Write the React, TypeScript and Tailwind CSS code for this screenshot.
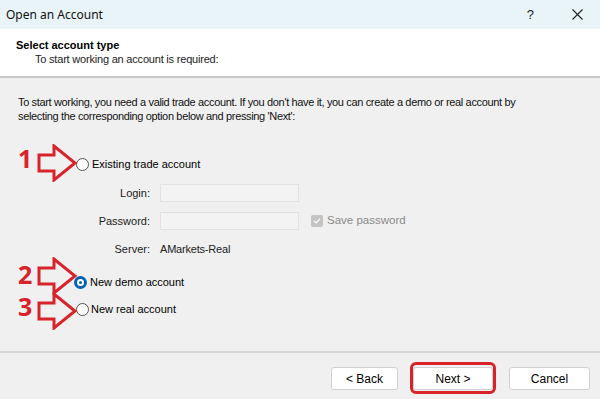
import React from 'react';

const font = { fontFamily: '"Liberation Sans", Arial, sans-serif' };
const digitFont = { fontFamily: '"Open Sans", "Liberation Sans", sans-serif' };

const Arrow: React.FC<{ className: string }> = ({ className }) => (
  <svg className={className} width="42" height="38" viewBox="0 0 42 38" fill="none">
    <path
      d="M2 11 H17 V2 L38 19 L17 36 V27 H2 Z"
      stroke="#d8232a"
      strokeWidth="3"
      strokeLinejoin="miter"
    />
  </svg>
);

const Radio: React.FC<{ checked?: boolean }> = ({ checked }) =>
  checked ? (
    <span className="w-[13px] h-[13px] rounded-full bg-[#0063b1] flex items-center justify-center">
      <span className="w-[7px] h-[7px] rounded-full border-2 border-white bg-[#0063b1]" />
    </span>
  ) : (
    <span className="w-[13px] h-[13px] rounded-full border border-[#555] bg-white" />
  );

const App: React.FC = () => {
  return (
    <div className="w-[600px] h-[399px] flex flex-col bg-[#f0f0f0] text-[11px] text-black overflow-hidden" style={font}>
      {/* title bar */}
      <div className="h-[29px] bg-[#e9f4f8] flex items-center pl-[6px] pr-[16px]">
        <span className="text-[12px] text-[#111]" style={{ fontFamily: '"Noto Sans", "Liberation Sans", sans-serif' }}>Open an Account</span>
        <span className="ml-auto text-[13px] text-[#222] mr-[38px]">?</span>
        <svg width="11" height="11" viewBox="0 0 11 11" className="mr-[1px]">
          <path d="M0.5 0.5 L10.5 10.5 M10.5 0.5 L0.5 10.5" stroke="#222" strokeWidth="1.1" />
        </svg>
      </div>

      {/* header */}
      <div className="h-[49px] bg-white pt-[10px] pl-[16px] border-b-2 border-[#c8c8c8]">
        <div className="font-bold text-[11px] leading-[13px]">Select account type</div>
        <div className="pl-[19px] leading-[14px] text-[#222] tracking-[-0.2px]">To start working an account is required:</div>
      </div>

      {/* body */}
      <div className="relative flex-1 pl-[18px] pt-[17px] border-b-2 border-[#d6d6d6]">
        <p className="leading-[14px] tracking-[-0.35px] text-[#111] w-[530px]">
          To start working, you need a valid trade account. If you don't have it, you can create a demo or real account by selecting the corresponding option below and pressing 'Next':
        </p>

        <div className="mt-[34px] ml-[58px] flex items-center gap-[2px] h-[14px]">
          <Radio />
          <span className="ml-[1px]">Existing trade account</span>
        </div>

        <div className="grid grid-cols-[132px_139px_auto] gap-x-[10px] gap-y-[10px] mt-[13px] items-center">
          <span className="text-right text-[#222]">Login:</span>
          <div className="h-[18px] border border-[#e2e2e2] bg-[#f3f3f3]" />
          <span />
          <span className="text-right text-[#222]">Password:</span>
          <div className="h-[18px] border border-[#e2e2e2] bg-[#f3f3f3]" />
          <span className="flex items-center gap-[4px] ml-[2px] text-[#8a8a8a] text-[11.5px]">
            <span className="w-[12px] h-[12px] rounded-[2px] bg-[#c4c4c4] flex items-center justify-center">
              <svg width="8" height="8" viewBox="0 0 8 8">
                <path d="M1 4 L3.2 6 L7 1.8" stroke="white" strokeWidth="1.2" fill="none" />
              </svg>
            </span>
            Save password
          </span>
          <span className="text-right text-[#222] mt-[1px]">Server:</span>
          <span className="text-[#222] mt-[1px] tracking-[-0.2px]">AMarkets-Real</span>
          <span />
        </div>

        <div className="mt-[18px] ml-[56px] flex items-center gap-[3px] h-[14px]">
          <Radio checked />
          <span>New demo account</span>
        </div>
        <div className="mt-[13px] ml-[58px] flex items-center gap-[2px] h-[14px]">
          <Radio />
          <span>New real account</span>
        </div>

        {/* annotations */}
        <span className="absolute left-[18px] top-[68px] text-[#d8232a] font-bold text-[25px] leading-none" style={digitFont}>1</span>
        <Arrow className="absolute left-[37px] top-[66px]" />
        <span className="absolute left-[18px] top-[184px] text-[#d8232a] font-bold text-[25px] leading-none" style={digitFont}>2</span>
        <Arrow className="absolute left-[37px] top-[179px]" />
        <span className="absolute left-[18px] top-[216px] text-[#d8232a] font-bold text-[25px] leading-none" style={digitFont}>3</span>
        <Arrow className="absolute left-[37px] top-[214px]" />
      </div>

      {/* footer */}
      <div className="h-[46px] flex items-start pt-[14px] pr-[10px] justify-end text-[12px]">
        <button className="w-[67px] h-[23px] bg-white border border-[#d0d0d0] rounded-[3px] mr-[15px]">&lt; Back</button>
        <div className="relative mr-[16px]">
          <button className="w-[80px] h-[23px] bg-white border border-[#d0d0d0] rounded-[3px]">Next &gt;</button>
          <span className="absolute -left-[3px] -top-[5px] w-[86px] h-[32px] border-[3px] border-[#d8232a] rounded-[6px]" />
        </div>
        <button className="w-[81px] h-[23px] bg-white border border-[#d0d0d0] rounded-[3px]">Cancel</button>
      </div>
    </div>
  );
};

export default App;
